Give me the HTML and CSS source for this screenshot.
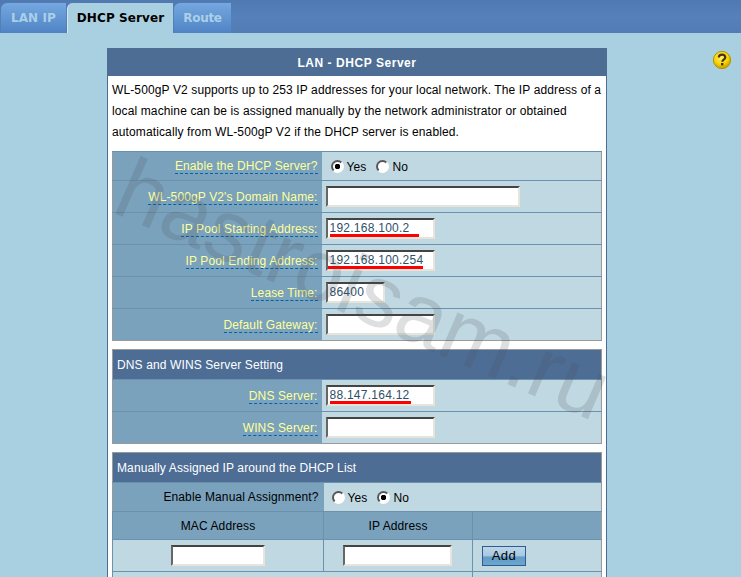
FILE: index.html
```html
<!DOCTYPE html>
<html lang="en">
<head>
    <meta charset="UTF-8">
    <meta name="viewport" content="width=device-width, initial-scale=1.0">
    <link rel="stylesheet" href="styles.css">
</head>
<body>
    <div class="tabs">
        <div class="tab tab-lan">LAN IP</div>
        <div class="tab tab-dhcp active">DHCP Server</div>
        <div class="tab tab-route">Route</div>
    </div>

    <div class="content">
        <div class="panel">
            <div class="panel-title">LAN - DHCP Server</div>
            <p class="intro">WL-500gP V2 supports up to 253 IP addresses for your local network. The IP address of a local machine can be is assigned manually by the network administrator or obtained automatically from WL-500gP V2 if the DHCP server is enabled.</p>

            <table class="form">
                <colgroup><col class="col-label"><col></colgroup>
                <tr class="h29">
                    <th><span class="hint">Enable the DHCP Server?</span></th>
                    <td class="radios"><label class="radio-row"><input type="radio" name="dhcp" checked>Yes</label><label class="radio-row"><input type="radio" name="dhcp">No</label></td>
                </tr>
                <tr>
                    <th><span class="hint">WL-500gP V2's Domain Name:</span></th>
                    <td><input class="text w-domain" type="text"></td>
                </tr>
                <tr>
                    <th><span class="hint">IP Pool Starting Address:</span></th>
                    <td><span class="marked mark-start"><input class="text w-ip" type="text" value="192.168.100.2"></span></td>
                </tr>
                <tr>
                    <th><span class="hint">IP Pool Ending Address:</span></th>
                    <td><span class="marked mark-end"><input class="text w-ip" type="text" value="192.168.100.254"></span></td>
                </tr>
                <tr>
                    <th><span class="hint">Lease Time:</span></th>
                    <td><input class="text w-lease" type="text" value="86400"></td>
                </tr>
                <tr>
                    <th><span class="hint">Default Gateway:</span></th>
                    <td><input class="text w-ip" type="text"></td>
                </tr>
            </table>

            <table class="form">
                <colgroup><col class="col-label"><col></colgroup>
                <tr class="section"><td colspan="2">DNS and WINS Server Setting</td></tr>
                <tr>
                    <th><span class="hint">DNS Server:</span></th>
                    <td><span class="marked mark-dns"><input class="text w-ip" type="text" value="88.147.164.12"></span></td>
                </tr>
                <tr>
                    <th><span class="hint">WINS Server:</span></th>
                    <td><input class="text w-ip" type="text"></td>
                </tr>
            </table>

            <table class="form manual">
                <colgroup><col class="col-mac"><col class="col-ip"><col></colgroup>
                <tr class="section"><td colspan="3">Manually Assigned IP around the DHCP List</td></tr>
                <tr class="h29">
                    <th>Enable Manual Assignment?</th>
                    <td colspan="2"><label class="radio-row"><input type="radio" name="manual">Yes</label><label class="radio-row"><input type="radio" name="manual" checked>No</label></td>
                </tr>
                <tr class="heads">
                    <th>MAC Address</th>
                    <th>IP Address</th>
                    <th></th>
                </tr>
                <tr class="entry">
                    <td><input class="text w-mac" type="text"></td>
                    <td class="ip-cell"><input class="text w-ip" type="text"></td>
                    <td class="add-cell"><button class="add" type="button">Add</button></td>
                </tr>
                <tr class="entry">
                    <td colspan="2" class="list-cell"><div class="list-box"></div></td>
                    <td></td>
                </tr>
            </table>
        </div>

        <svg class="help" width="20" height="20" viewBox="0 0 20 20">
            <defs>
                <radialGradient id="coin" cx="45%" cy="35%" r="65%">
                    <stop offset="0" stop-color="#fff27a"/>
                    <stop offset="0.6" stop-color="#f7d500"/>
                    <stop offset="1" stop-color="#c79a00"/>
                </radialGradient>
            </defs>
            <circle cx="10" cy="10" r="8.6" fill="url(#coin)" stroke="#b89000"/>
            <path d="M6.8 7.6c0-2 1.4-3 3.3-3s3.2 1 3.2 2.7c0 2.4-3 2.3-3 4.4" fill="none" stroke="#4a3312" stroke-width="2.2"/>
            <rect x="9" y="13" width="2.4" height="2.4" fill="#4a3312"/>
        </svg>

        <div class="watermark">hastroisam.ru</div>
    </div>
</body>
</html>
```

FILE: styles.css
```css
html, body {
    margin: 0;
    padding: 0;
    height: 577px;
    overflow: hidden;
}

body {
    background-color: #a9d0e0;
    font-family: "Liberation Sans", Arial, sans-serif;
    font-size: 12px;
    letter-spacing: 0.12px;
    color: #000;
}

.tabs {
    display: flex;
    gap: 1px;
    height: 30px;
    padding: 3px 0 0 1px;
    background: linear-gradient(#5079b2, #5580b9 50%, #527cb4);
}

.tab {
    display: flex;
    align-items: center;
    justify-content: center;
    box-sizing: border-box;
    font-family: "DejaVu Sans", Verdana, sans-serif;
    font-size: 12px;
    font-weight: bold;
    letter-spacing: 0.1px;
    color: #a9d0e8;
    background: linear-gradient(#75a8e0, #4f83c4);
    border-top-left-radius: 6px;
}

.tab-lan {
    width: 65px;
}

.tab-dhcp {
    width: 106px;
}

.tab-route {
    width: 57px;
    letter-spacing: -0.3px;
}

.tab.active {
    color: #000;
    background: #a9d0e0;
    border-left: 1px solid #d8e8f0;
}

.content {
    position: relative;
    height: 544px;
    overflow: hidden;
    padding: 15px 0 0 107px;
    box-sizing: border-box;
}

.panel {
    box-sizing: border-box;
    width: 500px;
    padding-bottom: 20px;
    background-color: #fff;
    border: solid #4d6d95;
    border-width: 0 1px;
}

.panel-title {
    height: 28px;
    line-height: 31px;
    margin: 0 -1px;
    text-align: center;
    font-weight: bold;
    letter-spacing: 0.55px;
    color: #fff;
    background-color: #4d6d95;
}

.intro {
    margin: 0;
    padding: 4px 2px 8px 4px;
    line-height: 21px;
}

.form {
    width: 490px;
    margin: 0 0 8px 4px;
    border-collapse: collapse;
    border: 1px solid #9a9a9a;
    table-layout: fixed;
    background-color: #c0d8e2;
}

.col-label {
    width: 209px;
}

.form tr {
    height: 32px;
}

.form tr.h29 {
    height: 29px;
}

.form th {
    padding: 0 4px 0 0;
    text-align: right;
    font-weight: normal;
    background-color: #7aa2bc;
    border-top: 1px solid #6a92ac;
}

.manual th {
    padding-right: 5px;
}

.form td {
    padding: 0 0 0 4px;
    border-top: 1px solid #6a92ac;
}

.form td.radios {
    padding-left: 5px;
}

.hint {
    color: #ffff99;
    border-bottom: 1px dashed #0063a5;
}

.form tr.section {
    height: 30px;
}

.section td {
    padding-left: 4px;
    color: #fff;
    background-color: #4d6d95;
    border-top: 0;
}

.radio-row {
    display: inline-flex;
    align-items: center;
    margin-right: 6px;
    padding-top: 3px;
}

.radio-row input {
    appearance: none;
    box-sizing: border-box;
    width: 13px;
    height: 13px;
    margin: 0 3px 2px 4px;
    border-radius: 50%;
    border: 2px solid;
    border-color: #555 #fff #fff #555;
    background-color: #fff;
}

.radio-row input:checked {
    background: radial-gradient(circle, #000 0, #000 2.5px, #fff 3px);
}

.text {
    box-sizing: border-box;
    height: 21px;
    padding: 0 2px 2px;
    margin: 0;
    vertical-align: middle;
    font-family: "Liberation Sans", Arial, sans-serif;
    font-size: 12px;
    letter-spacing: 0.25px;
    color: #2e5068;
    background-color: #fff;
    border: 2px solid;
    border-color: #444 #e8e4dc #e8e4dc #666;
}

.w-domain {
    width: 194px;
}

.w-ip {
    width: 109px;
}

.w-lease {
    width: 59px;
}

.w-mac {
    width: 94px;
}

.marked {
    position: relative;
    display: inline-block;
}

/* hand drawn red underline on the values that matter */
.marked::after {
    content: "";
    position: absolute;
    bottom: 2px;
    height: 3px;
    background-color: #f00;
}

.mark-start::after {
    left: 4px;
    width: 89px;
}

.mark-end::after {
    left: 2px;
    width: 95px;
}

.mark-dns::after {
    left: 4px;
    width: 81px;
}

.col-mac {
    width: 211px;
}

.col-ip {
    width: 149px;
}

.manual .heads {
    height: 28px;
}

.manual .heads th {
    padding: 0;
    text-align: center;
    border-left: 1px solid #6a92ac;
}

.manual .entry {
    height: 32px;
}

.manual .entry td {
    padding: 0;
    text-align: center;
    border-left: 1px solid #6a92ac;
}

.manual .entry .ip-cell {
    padding-right: 2px;
}

.manual .entry .add-cell {
    padding-left: 9px;
    text-align: left;
}

.add {
    width: 44px;
    height: 20px;
    padding: 0;
    font-family: "Liberation Sans", Arial, sans-serif;
    font-size: 13px;
    letter-spacing: 0.5px;
    background: linear-gradient(#bcd6ea, #a8c8e0 50%, #5f9cc8 55%, #6ea6cc);
    border: 1px solid #2f5a92;
}

.manual .entry .list-cell {
    padding: 5px 0 0 5px;
    vertical-align: top;
}

.list-box {
    box-sizing: border-box;
    width: 349px;
    height: 24px;
    background-color: #fff;
    border: 2px solid;
    border-color: #444 #e8e4dc #e8e4dc #666;
}

.help {
    position: absolute;
    left: 712px;
    top: 17px;
}

/* faint site stamp laid over the whole panel */
.watermark {
    position: absolute;
    left: 142px;
    top: 105px;
    font-family: "Liberation Sans", Arial, sans-serif;
    font-size: 87px;
    letter-spacing: 0;
    white-space: nowrap;
    color: rgba(70, 80, 85, 0.18);
    transform: rotate(23.5deg);
    transform-origin: 0 0;
    pointer-events: none;
}
```
